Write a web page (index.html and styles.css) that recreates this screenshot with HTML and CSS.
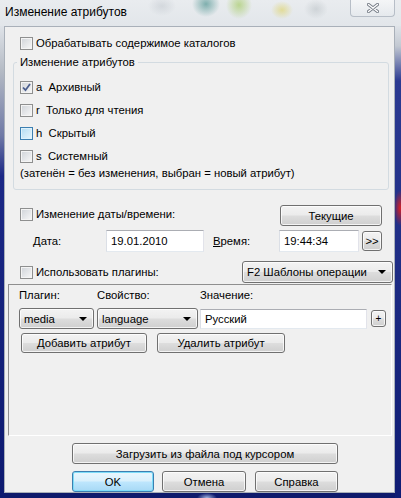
FILE: index.html
```html
<!DOCTYPE html>
<html lang="ru">
<head>
  <meta charset="UTF-8">
  <title>Изменение атрибутов</title>
  <link rel="stylesheet" href="styles.css">
</head>
<body>
  <div class="window">
    <div class="titlebar">
      <span class="title">Изменение атрибутов</span>
      <span class="close">
        <svg width="12" height="10" viewBox="0 0 12 10">
          <path d="M1.5 1.5 L10.5 8.5 M10.5 1.5 L1.5 8.5" stroke="#767d87" stroke-width="3.2" stroke-linecap="round"/>
          <path d="M1.5 1.5 L10.5 8.5 M10.5 1.5 L1.5 8.5" stroke="#ffffff" stroke-width="1.4" stroke-linecap="round"/>
        </svg>
      </span>
    </div>

    <div class="frame">
      <div class="client">
        <label class="check top-check"><span class="box"></span>Обрабатывать содержимое каталогов</label>

        <fieldset class="group">
          <legend>Изменение атрибутов</legend>
          <div class="attr-list">
            <label class="check"><span class="box checked">
              <svg width="11" height="11" viewBox="0 0 11 11"><path d="M2 5.5 L4.5 8.2 L9 2" fill="none" stroke="#4b5e8e" stroke-width="1.8"/></svg>
            </span><span class="attr">a  Архивный</span></label>
            <label class="check"><span class="box"></span><span class="attr">r  Только для чтения</span></label>
            <label class="check"><span class="box hover"></span><span class="attr">h  Скрытый</span></label>
            <label class="check"><span class="box"></span><span class="attr">s  Системный</span></label>
          </div>
          <div class="hint">(затенён = без изменения, выбран = новый атрибут)</div>
        </fieldset>

        <div class="row date-head">
          <label class="check"><span class="box"></span>Изменение даты/времени:</label>
          <button class="btn now">Текущие</button>
        </div>

        <div class="row date-fields">
          <span class="lbl date-lbl">Дата:</span>
          <span class="field date-field">19.01.2010</span>
          <span class="lbl time-lbl"><u>В</u>ремя:</span>
          <span class="field time-field">19:44:34</span>
          <button class="btn more">&gt;&gt;</button>
        </div>

        <div class="row plugin-head">
          <label class="check"><span class="box"></span>Использовать плагины:</label>
          <div class="combo tpl">F2 Шаблоны операции<span class="arrow"></span></div>
        </div>

        <div class="panel">
          <div class="panel-labels">
            <span class="col-plugin">Плагин:</span>
            <span class="col-prop">Свойство:</span>
            <span>Значение:</span>
          </div>
          <div class="panel-controls">
            <div class="combo media">media<span class="arrow"></span></div>
            <div class="combo prop">language<span class="arrow"></span></div>
            <span class="field value">Русский</span>
            <button class="btn plus">+</button>
          </div>
          <div class="panel-buttons">
            <button class="btn add">Добавить атрибут</button>
            <button class="btn remove">Удалить атрибут</button>
          </div>
        </div>

        <button class="btn load">Загрузить из файла под курсором</button>

        <div class="actions">
          <button class="btn default ok">OK</button>
          <button class="btn cancel">Отмена</button>
          <button class="btn help">Справка</button>
        </div>
      </div>
    </div>
  </div>
</body>
</html>
```

FILE: styles.css
```css
* {
  box-sizing: border-box;
}

html, body {
  margin: 0;
}

body {
  width: 401px;
  height: 498px;
  overflow: hidden;
  font-family: "Liberation Sans", Arial, sans-serif;
  font-size: 11.3px;
  color: #000;
}

.window {
  width: 401px;
  height: 498px;
  display: flex;
  flex-direction: column;
  background: #0e1a6c;
}

/* glass title bar, blurred desktop behind it */
.titlebar {
  height: 26px;
  flex: none;
  display: flex;
  align-items: flex-start;
  padding: 0 6px 0 5px;
  background:
    radial-gradient(ellipse 14px 13px at 206px 4px, rgba(40, 125, 120, 0.55), transparent),
    radial-gradient(ellipse 13px 14px at 239px 5px, rgba(150, 195, 70, 0.55), transparent),
    radial-gradient(ellipse 11px 9px at 282px 10px, rgba(220, 205, 70, 0.5), transparent),
    radial-gradient(ellipse 12px 10px at 316px 9px, rgba(150, 160, 165, 0.3), transparent),
    radial-gradient(ellipse 14px 10px at 162px 6px, rgba(150, 160, 170, 0.25), transparent),
    linear-gradient(#e9ecef, #e2e6ea);
}

.title {
  font-size: 12px;
  line-height: 14px;
  margin-top: 5px;
}

.close {
  margin-left: auto;
  width: 45px;
  height: 17px;
  display: flex;
  align-items: center;
  justify-content: center;
  border: 1px solid #b7bec7;
  border-top: none;
  border-radius: 0 0 4px 4px;
  background: linear-gradient(rgba(255, 255, 255, 0.5), rgba(230, 234, 238, 0.4));
}

.frame {
  flex: 1;
  display: flex;
  padding: 0 6px 5px 4px;
  background:
    radial-gradient(ellipse 6px 18px at 400px 182px, rgba(225, 30, 30, 0.95), transparent),
    radial-gradient(ellipse 10px 5px at 207px 472px, rgba(200, 220, 255, 0.8), transparent),
    linear-gradient(to bottom, #dfe3e8 0, #b4bac4 45px, #6f79a6 110px, #1b2886 150px, #0d1a70 100%) left top / 5px 100% no-repeat,
    linear-gradient(to bottom, #dfe3e8 0, #c3c9d2 20px, #2b3a92 55px, #0f1c74 100%) right top / 6px 100% no-repeat,
    #0e1a6c;
}

.client {
  flex: 1;
  display: flex;
  flex-direction: column;
  background: #f0f0f0;
  border: 1px solid #a9b0b9;
}

/* checkboxes */
.check {
  display: flex;
  align-items: center;
  gap: 3px;
  line-height: 13px;
  white-space: pre;
}

.box {
  width: 13px;
  height: 13px;
  flex: none;
  display: flex;
  align-items: center;
  justify-content: center;
  border: 1px solid #8e8f8f;
  background: linear-gradient(135deg, #cfd3d8, #f8f8f8);
  box-shadow: inset 0 0 0 1px #f4f4f4;
}

.box.hover {
  border-color: #3c7fb1;
  background: linear-gradient(135deg, #b3dcf2, #e8f6fd);
  box-shadow: inset 0 0 0 1px #def2fc;
}

.top-check {
  margin: 10px 0 0 15px;
  height: 13px;
}

.group {
  margin: 5px 5px 0 8px;
  padding: 0 0 9px 3px;
  border: 1px solid #d3dbe1;
  border-radius: 3px;
}

.group legend {
  padding: 0 3px;
  line-height: 14px;
}

.attr-list {
  display: flex;
  flex-direction: column;
  gap: 10px;
  margin: 12px 0 0 3px;
}

.hint {
  margin: 3px 0 0 3px;
  line-height: 14px;
}

/* rows under the group */
.row {
  display: flex;
}

.date-head {
  margin-top: 15px;
  height: 21px;
  padding: 0 12px 0 15px;
  align-items: flex-start;
}

.date-head .check {
  margin-top: 3px;
}

.now {
  margin-left: auto;
  width: 102px;
  height: 21px;
}

.date-fields {
  margin-top: 4px;
  height: 22px;
  align-items: center;
  padding-left: 28px;
}

.lbl {
  line-height: 14px;
}

.date-lbl {
  width: 73px;
}

.time-lbl {
  width: 66px;
  margin-left: 9px;
}

.field {
  height: 22px;
  display: flex;
  align-items: center;
  padding-left: 4px;
  background: #fff;
  border: 1px solid;
  border-color: #abadb3 #e2e3ea #e3e9ef #dbdfe6;
}

.date-field {
  width: 98px;
}

.time-field {
  width: 80px;
}

.more {
  width: 20px;
  height: 20px;
  margin-left: 3px;
  font-size: 9px;
}

.plugin-head {
  margin-top: 9px;
  height: 22px;
  align-items: center;
  padding: 0 1px 0 15px;
}

.tpl {
  margin-left: auto;
  width: 151px;
  height: 22px;
}

/* buttons and combos */
.btn,
.combo {
  font: inherit;
  color: #000;
  padding: 0;
  border: 1px solid #707070;
  border-radius: 3px;
  background: linear-gradient(#f3f3f3 0%, #ebebeb 48%, #dddddd 52%, #cfcfcf 100%);
  box-shadow: inset 0 0 0 1px rgba(255, 255, 255, 0.75);
}

.btn.default {
  border-color: #3c7fb1;
  background: linear-gradient(#eaf6fd 0%, #d9f0fc 48%, #bee6fd 52%, #a7d9f5 100%);
  box-shadow: inset 0 0 0 1px #7ddcf8;
}

.combo {
  display: flex;
  align-items: center;
  padding-left: 4px;
}

.arrow {
  margin-left: auto;
  margin-right: 6px;
  width: 0;
  height: 0;
  border-left: 4px solid transparent;
  border-right: 4px solid transparent;
  border-top: 4px solid #000;
}

/* plugin panel */
.panel {
  margin: 1px 2px 0 3px;
  height: 152px;
  border: 1px solid;
  border-color: #8f8f8f #ffffff #ffffff #8f8f8f;
}

.panel-labels {
  display: flex;
  padding: 3px 0 0 10px;
  line-height: 14px;
}

.col-plugin {
  width: 78px;
}

.col-prop {
  width: 103px;
}

.panel-controls {
  display: flex;
  align-items: center;
  margin: 6px 0 0 10px;
  height: 21px;
}

.media {
  width: 75px;
  height: 21px;
}

.prop {
  width: 101px;
  height: 21px;
  margin-left: 3px;
}

.value {
  width: 167px;
  height: 20px;
  margin-left: 2px;
}

.plus {
  width: 15px;
  height: 17px;
  margin-left: 4px;
  font-size: 10px;
}

.panel-buttons {
  display: flex;
  gap: 10px;
  margin: 4px 0 0 12px;
}

.add {
  width: 126px;
  height: 20px;
}

.remove {
  width: 128px;
  height: 20px;
}

.load {
  margin: 7px 0 0 67px;
  width: 266px;
  height: 21px;
  flex: none;
}

.actions {
  display: flex;
  margin: 7px 0 0 67px;
}

.actions .btn {
  height: 21px;
}

.ok {
  width: 82px;
}

.cancel {
  width: 84px;
  margin-left: 8px;
}

.help {
  width: 83px;
  margin-left: 9px;
}
```
